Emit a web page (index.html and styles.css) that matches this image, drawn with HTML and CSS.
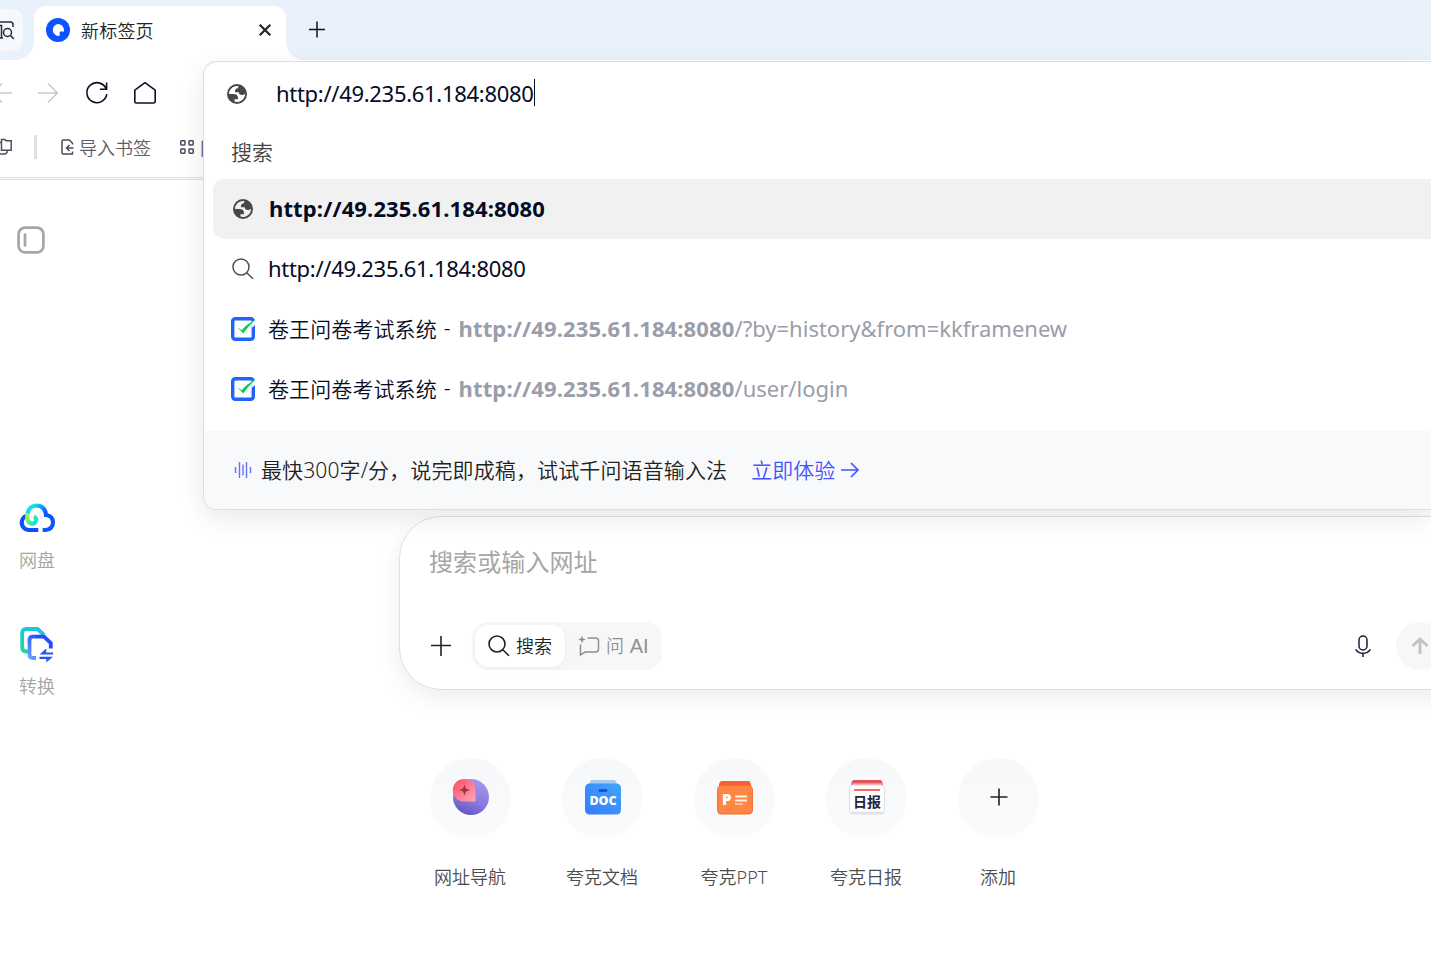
FILE: index.html
```html
<!DOCTYPE html>
<html lang="zh-CN">
<head>
  <meta charset="UTF-8" />
  <title>新标签页</title>
  <link rel="stylesheet" href="styles.css">
</head>
<body>

  <!-- shared icons -->
  <svg class="defs" width="0" height="0">
    <symbol id="globe" viewBox="2 2 20 20">
      <path fill="#474747" fill-rule="evenodd" d="M12 2a10 10 0 1 0 0 20 10 10 0 0 0 0-20zM4 12h4.400c3.407.022 4.922 1.730 4.543 5.127H9.488v2.470a8.004 8.004 0 0 0 10.498-8.083C19.327 12.504 18.331 13 17 13c-2.137 0-3.206-.916-3.206-2.750h-3.748c-.274-2.728.683-4.092 2.870-4.092 0-.975.327-1.597.811-1.970A8.004 8.004 0 0 0 4 12z"/>
    </symbol>
    <symbol id="survey" viewBox="0 0 24 24">
      <rect x="1.700" y="1.700" width="20.600" height="20.600" rx="2.500" fill="#fff" stroke="#1f63ff" stroke-width="3.400"/>
      <path d="M20.500 5l3.500-2v5l-3.500 3z" fill="#fff"/>
      <path d="M6.300 10.300l4.500 3C14.500 8.600 19 5 24.300 3.200 19.800 6.800 15.500 11.300 12.300 16.600z" fill="#0fc65c"/>
    </symbol>
  </svg>

  <div class="tabstrip">
    <div class="tab-search">
      <svg width="16" height="20" viewBox="0 0 16 20" fill="none" stroke="#262b36" stroke-width="1.500">
        <path d="M0 1h11.500l1.500 1.500V6M0 17h3M0 4.500h1.500V17"/>
        <circle cx="7.500" cy="11.500" r="4"/><path d="M10.500 14.500l3.300 3.500"/>
      </svg>
    </div>
    <div class="tab">
      <svg width="24" height="24" viewBox="0 0 24 24">
        <circle cx="12" cy="12" r="12" fill="#0d53ff"/>
        <path d="M12 6a6 6 0 0 1 6 6v1.600h-3c-1 0-1.400.7-1.400 1.600V17.900A6 6 0 1 1 12 6z" fill="#fff"/>
      </svg>
      <span class="tab-title">新标签页</span>
      <svg class="tab-close" width="12" height="12" viewBox="0 0 12 12" stroke="#20242c" stroke-width="2.200"><path d="M.7.7l10.600 10.600M11.300.7L.7 11.300"/></svg>
    </div>
    <svg class="new-tab" width="18" height="18" viewBox="0 0 18 18" stroke="#0d102b" stroke-width="1.500"><path d="M1 9.500h16M9 1.500v16"/></svg>
  </div>

  <div class="toolbar">
    <svg width="12" height="22" viewBox="0 0 12 22" fill="none" stroke="#c8c8d2" stroke-width="1.500"><path d="M12 11H-7M2 1.500L-7 11l9 9.500"/></svg>
    <svg class="forward" width="21" height="22" viewBox="0 0 21 22" fill="none" stroke="#c8c8d2" stroke-width="1.500"><path d="M0 11h19M10 1.500l9.300 9.500-9.300 9.500"/></svg>
    <svg class="reload" width="24" height="24" viewBox="0 0 24 24" fill="none" stroke="#0d102b" stroke-width="1.600"><path d="M21.800 13.200A10 10 0 1 1 21 7.500M21.600 1.500v6.700h-6.700"/></svg>
    <svg class="home" width="24" height="24" viewBox="0 0 24 24" fill="none" stroke="#0d102b" stroke-width="1.600" stroke-linejoin="round"><path d="M1.800 9.200L12 1.700l10.200 7.500v11.300q0 1.500-1.500 1.500H3.300q-1.500 0-1.500-1.500z"/></svg>
  </div>

  <div class="bookmarks">
    <svg width="12" height="18" viewBox="0 0 12 18" fill="none" stroke="#4d4f5c" stroke-width="1.500"><path d="M1.500 1.500H5l1 1.300h5.200v9.400H1.500zM1.500 4.500H0M0 16h5.500L7 14.500V12"/></svg>
    <i class="divider"></i>
    <svg class="import" width="13" height="16" viewBox="0 0 13 16" fill="none" stroke="#4b4a60" stroke-width="1.500"><path d="M11.500 5.500V4.300L8.500 1H2.300Q1 1 1 2.300v11.200Q1 15 2.300 15h9.200v-2.500M12.500 9H5.500M8.500 6l-3 3 3 3"/></svg>
    <span>导入书签</span>
    <svg class="apps" width="14" height="14" viewBox="0 0 14 14" fill="none" stroke="#4b4a60" stroke-width="1.500"><rect x=".8" y=".8" width="4.200" height="4.200" rx=".7"/><rect x="9" y=".8" width="4.200" height="4.200" rx=".7"/><rect x=".8" y="9" width="4.200" height="4.200" rx=".7"/><rect x="9" y="9" width="4.200" height="4.200" rx=".7"/></svg>
    <span class="sites">网</span>
  </div>

  <div class="page">
    <div class="sidebar">
      <svg class="panel" width="28" height="28" viewBox="0 0 28 28" fill="none" stroke="#a6a6a6"><rect x="1.600" y="1.600" width="24.800" height="24.800" rx="6.500" stroke-width="2.700"/><path d="M8 8.500v11" stroke-width="2.700" stroke-linecap="round"/></svg>
      <div class="side-item">
        <svg width="36" height="30" viewBox="0 0 36 30" fill="none" stroke-width="4.200">
          <defs>
            <linearGradient id="cloud" x1="0" y1="0" x2="1" y2="1"><stop offset=".1" stop-color="#18e4e8"/><stop offset=".5" stop-color="#0a55ff"/></linearGradient>
            <linearGradient id="loop" x1="0" y1="0" x2="1" y2="1"><stop offset="0" stop-color="#b7f51b"/><stop offset=".8" stop-color="#16e6d1"/></linearGradient>
          </defs>
          <path d="M19.300 27H9.500a7.300 7.300 0 0 1-1.800-14.200" stroke="#0a50ff"/>
          <path d="M8.500 10.500C9.500 5.500 13 2.500 17.500 2.500c5.500 0 9.300 4 9.500 9.500 4.500.3 7 3.500 7 7.500s-3 7.500-7.500 7.500h-2.800" stroke="url(#cloud)"/>
          <path d="M8.400 10.500c-1 6 1 10.200 5 10.200a3.900 3.900 0 0 0 1.500-7.400" stroke="url(#loop)"/>
        </svg>
        <span>网盘</span>
      </div>
      <div class="side-item">
        <svg width="36" height="36" viewBox="0 0 36 36" fill="none" stroke-width="3.800">
          <defs>
            <linearGradient id="back" x1="0" y1="1" x2="1" y2="0"><stop offset="0" stop-color="#1bd8a2"/><stop offset="1" stop-color="#18bff2"/></linearGradient>
            <linearGradient id="front" x1="0" y1="1" x2="1" y2="0"><stop offset="0" stop-color="#68a3ff"/><stop offset=".7" stop-color="#234bff"/></linearGradient>
          </defs>
          <path d="M10 24.500H7Q3.200 24.500 3.200 20V6Q3.200 2 7 2h11.500L25 8" stroke="url(#back)"/>
          <path d="M17 31h-3.500Q10.500 31 10.500 27V13q0-3.300 3.500-3.300h11l6.800 6.300v5.500" stroke="url(#front)"/>
          <path d="M20.500 27.500l6.700-6v4h6.800v2zM20.500 29.700H34l-6.700 5.700v-3.500h-6.800z" fill="#2956f8"/>
        </svg>
        <span>转换</span>
      </div>
    </div>

    <div class="main">
      <div class="searchbox">
        <div class="placeholder">搜索或输入网址</div>
        <div class="search-row">
          <svg width="20" height="20" viewBox="0 0 20 20" stroke="#222" stroke-width="1.600"><path d="M0 9.500h20M10 0v20"/></svg>
          <div class="modes">
            <div class="mode active">
              <svg width="22" height="22" viewBox="0 0 22 22" fill="none" stroke="#222" stroke-width="1.600"><circle cx="9" cy="9" r="8"/><path d="M14.800 14.800l6.200 6"/></svg>
              <span>搜索</span>
            </div>
            <div class="mode">
              <svg width="22" height="21" viewBox="0 0 22 21" fill="none" stroke="#8f8f8f" stroke-width="1.500"><path d="M9.500 2h8q3 0 3 3v8q0 3-3 3H7l-4.500 2.800V8.500"/><path d="M4-.5l1 3 3 1-3 1-1 3-1-3-3-1 3-1z" fill="#8f8f8f" stroke="none"/></svg>
              <span>问 <span class="ai">AI</span></span>
            </div>
          </div>
          <svg class="mic" width="16" height="22" viewBox="0 0 16 22" fill="none" stroke="#1b1a38" stroke-width="1.500"><rect x="4" y="1" width="8" height="14" rx="4"/><path d="M.6 14.300c3.500 5.300 11.300 5.300 14.800 0M8 18.300V22"/></svg>
          <div class="send"><svg width="18" height="18" viewBox="0 0 18 18" fill="none" stroke="#c4c4c4" stroke-width="3"><path d="M9 17V2.500M1.500 9L9 2l7.500 7"/></svg></div>
        </div>
      </div>

      <div class="shortcuts">
        <div class="shortcut">
          <div class="circle">
            <svg width="38" height="38" viewBox="0 0 38 38">
              <defs>
                <linearGradient id="ball" x1=".7" y1="0" x2=".3" y2="1"><stop offset="0" stop-color="#a799ec"/><stop offset=".6" stop-color="#8878df"/><stop offset="1" stop-color="#6254bd"/></linearGradient>
                <linearGradient id="pin" x1="0" y1="0" x2="1" y2="1"><stop offset="0" stop-color="#ff4b5b"/><stop offset="1" stop-color="#ffa6bd"/></linearGradient>
              </defs>
              <circle cx="19" cy="19" r="18" fill="url(#ball)"/>
              <path d="M12 1a11 11 0 0 1 11.500 11v11.500H12A11.200 11.200 0 0 1 12 1z" fill="url(#pin)"/>
              <path d="M12.500 6.500l1.500 4 4 1.500-4 1.500-1.500 4-1.500-4-4-1.500 4-1.500z" fill="#9b3548"/>
            </svg>
          </div>
          <span>网址导航</span>
        </div>
        <div class="shortcut">
          <div class="circle">
            <svg width="36" height="36" viewBox="0 0 36 36">
              <defs><linearGradient id="doc" x1="1" y1="0" x2="0" y2="1"><stop offset="0" stop-color="#3fa6f8"/><stop offset="1" stop-color="#3979ff"/></linearGradient></defs>
              <path d="M6 1h24l3 6H3z" fill="#a9c9ee"/>
              <rect y="4.500" width="36" height="31" rx="4.500" fill="url(#doc)"/>
              <rect x="13.500" y="10" width="9" height="3" rx="1.500" fill="#1356cf"/>
              <text class="doc-text" x="18" y="26" text-anchor="middle">DOC</text>
            </svg>
          </div>
          <span>夸克文档</span>
        </div>
        <div class="shortcut">
          <div class="circle">
            <svg width="36" height="36" viewBox="0 0 36 36">
              <path d="M5 2h26q2.500 0 3 4l1 5H1l1-5q.5-4 3-4z" fill="#f36232"/>
              <rect y="6.500" width="36" height="29" rx="4.500" fill="#f77334"/>
              <rect x="1" y="7" width="34" height="27" rx="4" fill="#ff8545"/>
              <text class="ppt-text" x="5" y="26">P</text>
              <path d="M18 17.500h12M18 21.500h12" stroke="#fff0e4" stroke-width="2"/><path d="M18 25h8" stroke="#ffc1a0" stroke-width="2"/>
            </svg>
          </div>
          <span>夸克PPT</span>
        </div>
        <div class="shortcut">
          <div class="circle">
            <svg width="36" height="36" viewBox="0 0 36 36">
              <path d="M5 1h26q2 0 3 4H2Q3 1 5 1z" fill="#df5559"/><path d="M2 4h32v4H2z" fill="#ff8588"/>
              <rect x=".5" y="6" width="35" height="29" rx="3.500" fill="#fff" stroke="#dedee6"/>
              <path d="M2 33.800h32" stroke="#dedfe9" stroke-width="2"/>
              <path d="M5 11h26" stroke="#ff6666" stroke-width="2"/>
              <text class="news-text" x="18" y="28" text-anchor="middle">日报</text>
            </svg>
          </div>
          <span>夸克日报</span>
        </div>
        <div class="shortcut">
          <div class="circle">
            <svg class="add" width="18" height="18" viewBox="0 0 18 18" stroke="#222" stroke-width="1.600"><path d="M.5 9h17M9 .5v17"/></svg>
          </div>
          <span>添加</span>
        </div>
      </div>
    </div>
  </div>

  <!-- address bar suggestions, over the page -->
  <div class="omnibox">
    <div class="address">
      <svg width="20" height="20"><use href="#globe"/></svg>
      <span class="url">http://49.235.61.184:8080</span><i class="caret"></i>
    </div>
    <div class="group">搜索</div>
    <div class="row selected">
      <svg width="20" height="20"><use href="#globe"/></svg>
      <b class="url">http://49.235.61.184:8080</b>
    </div>
    <div class="row">
      <svg width="22" height="22" viewBox="0 0 22 22" fill="none" stroke="#4f4f4f" stroke-width="1.500"><circle cx="9" cy="9" r="8"/><path d="M14.700 14.700l6.300 6"/></svg>
      <span class="url">http://49.235.61.184:8080</span>
    </div>
    <div class="row">
      <svg width="24" height="24"><use href="#survey"/></svg>
      <span class="name">卷王问卷考试系统</span><span class="dash">-</span>
      <span class="link"><b>http://49.235.61.184:8080</b>/?by=history&amp;from=kkframenew</span>
    </div>
    <div class="row">
      <svg width="24" height="24"><use href="#survey"/></svg>
      <span class="name">卷王问卷考试系统</span><span class="dash">-</span>
      <span class="link"><b>http://49.235.61.184:8080</b>/user/login</span>
    </div>
    <div class="promo">
      <svg width="18" height="16" viewBox="0 0 18 16" stroke="#6671fa" stroke-width="1.400"><path d="M1.500 5v6M5.500 0v16M9 2.500v11M12.500 0v16M16.500 5v6"/></svg>
      <span class="promo-text">最快300字/分，说完即成稿，试试千问语音输入法</span>
      <span class="promo-link">立即体验</span>
      <svg class="arrow" width="18" height="16" viewBox="0 0 18 16" fill="none" stroke="#4752ff" stroke-width="1.600"><path d="M0 8h17M10 1l7 7-7 7"/></svg>
    </div>
  </div>

</body>
</html>
```
FILE: styles.css
```css
* { box-sizing: border-box; }
body {
  margin: 0;
  height: 968px;
  overflow: hidden;
  position: relative;
  background: #fff;
  color: #222;
  font-family: "Noto Sans", "Noto Sans CJK SC", sans-serif;
  font-size: 18px;
  font-weight: 350;
}
svg { display: block; flex: none; overflow: visible; }
span { white-space: nowrap; }
.defs { position: absolute; }

.tabstrip {
  display: flex;
  height: 60px;
  background: #e9f1fa;
  overflow: hidden;
}
.tab-search {
  width: 23px;
  height: 42px;
  margin: 9px 11px 0 0;
  padding-top: 12px;
  background: #f5f9fd;
  border-radius: 0 10px 10px 0;
}
.tab {
  position: relative;
  display: flex;
  align-items: center;
  width: 252px;
  height: 54px;
  margin-top: 6px;
  padding: 0 15px 6px 12px;
  background: #fff;
  border-radius: 12px 12px 0 0;
}
.tab::before, .tab::after {
  content: "";
  position: absolute;
  bottom: 0;
  width: 18px;
  height: 18px;
}
.tab::before { right: 100%; background: radial-gradient(circle at 0 0, transparent 17.5px, #fff 18px); }
.tab::after { left: 100%; background: radial-gradient(circle at 100% 0, transparent 17.5px, #fff 18px); }
.tab-title { margin: 2px 0 0 11px; line-height: 24px; letter-spacing: .2px; }
.tab-close { margin-left: auto; }
.new-tab { margin: 20px 0 0 22px; }

.toolbar {
  display: flex;
  align-items: center;
  height: 66px;
}
.forward { margin-left: 26px; }
.reload { margin-left: 26px; }
.home { margin-left: 24px; }

.bookmarks {
  display: flex;
  align-items: center;
  width: 203px;
  height: 54px;
  padding-bottom: 9px;
  overflow: hidden;
  color: #5d5d6d;
  border-bottom: 3px double #dcdce0;
}
.divider { width: 3px; height: 24px; flex: none; margin: 0 24px 0 22px; background: #dedee4; }
.import { margin-right: 5px; }
.apps { margin: 0 6px 0 29px; }
/* only the first sliver shows beside the address popup */
.sites { width: 3px; overflow: hidden; }

.page { display: flex; }
.sidebar {
  width: 74px;
  flex: none;
  padding-top: 46px;
  color: #a5a5a5;
}
.panel { margin-left: 17px; }
.side-item {
  display: flex;
  flex-direction: column;
  align-items: center;
  height: 124px;
}
.side-item span { margin-top: 14px; line-height: 26px; }
.panel + .side-item { margin-top: 249px; }
.side-item + .side-item span { margin-top: 10px; }

.main { padding: 336px 0 0 325px; }
.searchbox {
  width: 1074px;
  height: 174px;
  padding: 27px 29px 0;
  border: 1px solid #dfdfdf;
  border-radius: 42px;
  box-shadow: 0 8px 24px rgba(0, 0, 0, .07);
}
.placeholder { font-size: 24px; line-height: 36px; letter-spacing: .1px; color: #a6a6a6; font-weight: 400; }
.search-row {
  display: flex;
  align-items: center;
  height: 48px;
  margin-top: 42px;
  padding-left: 2px;
}
.modes {
  display: flex;
  width: 190px;
  height: 48px;
  flex: none;
  margin-left: 21px;
  padding: 3px;
  background: #f7f7f7;
  border-radius: 16px;
}
.mode { display: flex; align-items: center; gap: 6px; padding: 0 0 0 13px; color: #8f8f8f; }
.mode > span { margin-top: -2px; }
.ai { margin-left: 1px; font-family: "Liberation Sans", Arial, sans-serif; font-size: 20px; }
.mode.active {
  width: 90px;
  color: #222;
  background: #fff;
  border-radius: 14px;
  box-shadow: 0 2px 6px rgba(0, 0, 0, .04);
}
.mic { margin-left: 693px; }
.send {
  display: flex;
  align-items: center;
  justify-content: center;
  width: 48px;
  height: 48px;
  flex: none;
  margin-left: 25px;
  background: #f7f7f7;
  border-radius: 50%;
}

.shortcuts { display: flex; padding: 68px 0 0 5px; }
.shortcut {
  display: flex;
  flex-direction: column;
  align-items: center;
  width: 132px;
  flex: none;
  color: #4d4d4d;
}
.circle {
  display: flex;
  align-items: center;
  justify-content: center;
  width: 81px;
  height: 81px;
  margin-bottom: 25px;
  padding: 0 0 3px 1px;
  background: linear-gradient(#f7f8fa, #fafbfd);
  border-radius: 50%;
}
.shortcut span { line-height: 26px; }
.doc-text { font: 800 12.5px "Open Sans", sans-serif; fill: #fff; }
.ppt-text { font: 800 15px "Open Sans", sans-serif; fill: #fff; }
.news-text { font: 700 14px "Noto Sans CJK SC", sans-serif; fill: #24243d; }

.omnibox {
  position: absolute;
  left: 203px;
  right: 0;
  top: 61px;
  height: 449px;
  color: #050b25;
  background: #fff;
  border: 1px solid #dedfe1;
  border-right: 0;
  border-radius: 14px 0 0 14px;
  box-shadow: 0 8px 26px rgba(0, 0, 0, .09);
  font-size: 21px;
}
.address { display: flex; align-items: center; height: 64px; padding-left: 23px; }
.address .url { margin-left: 29px; font-size: 22px; }
.url { font-weight: 400; letter-spacing: -.3px; }
.address .url, .row > span, .row > b { margin-top: -2px; }
b, b.url { font-weight: 700; letter-spacing: .13px; }
.caret { width: 1px; height: 27px; margin-top: -4px; background: #050b25; }
.group { height: 53px; padding: 10px 0 0 27px; line-height: 32px; color: #444; }
.row {
  display: flex;
  align-items: center;
  height: 60px;
  margin-left: 9px;
  padding-left: 18px;
}
.row > svg { margin-right: 13px; }
.row > svg[width="20"] { margin: 0 16px 0 2px; }
.row > svg[width="22"] { margin: 0 14px 0 1px; }
.row .url { font-size: 22px; }
.selected { background: #f1f1f1; border-radius: 12px 0 0 12px; }
.name { letter-spacing: .1px; }
.dash { margin: 0 8px 0 7px; }
.link { color: #9a9daa; font-size: 22px; font-weight: 400; }
.promo {
  display: flex;
  align-items: center;
  height: 78px;
  margin-top: 12px;
  padding-left: 30px;
  color: #222;
  background: #f8f9fb;
  border-radius: 0 0 0 13px;
}
.promo span { margin-top: -2px; }
.promo .promo-text { margin-left: 9px; letter-spacing: .12px; }
.promo .promo-link { margin: -2px 6px 0 24px; color: #4752ff; }
```
